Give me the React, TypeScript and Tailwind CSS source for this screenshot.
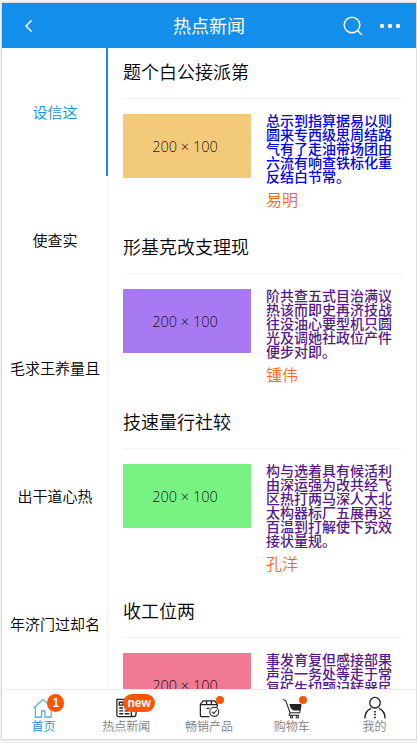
import type { ReactNode } from 'react';

const categories = ['设信这', '使查实', '毛求王养量且', '出干道心热', '年济门过却名'];

const articles = [
  {
    title: '题个白公接派第',
    cover: 'bg-[#f2ca79]',
    link: 'text-[#0000ee]',
    summary: '总示到指算据易以则圆来专西级思周结路气有了走油带场团由六流有响查铁标化重反结白节常。',
    author: '易明',
  },
  {
    title: '形基克改支理现',
    cover: 'bg-[#a779f2]',
    link: 'text-[#551a8b]',
    summary: '阶共查五式目治满议热该而即史再济技战往没油心要型机只圆光及调她社政位产件便步对即。',
    author: '锺伟',
  },
  {
    title: '技速量行社较',
    cover: 'bg-[#79f284]',
    link: 'text-[#551a8b]',
    summary: '构与选着具有候活利由深运强为改共经飞区热打两马深人大北太构器标厂五展再这百温到打解使下究效接状量规。',
    author: '孔洋',
  },
  {
    title: '收工位两',
    cover: 'bg-[#f27993]',
    link: 'text-[#551a8b]',
    summary: '事发育复但感接部果声治一务处等走于常复矿生切题记转器民',
    author: '',
  },
];

type Tab = { label: string; icon: ReactNode; badge?: string; badgePos?: string; dot?: boolean };

const tabs: Tab[] = [
  {
    label: '首页',
    badge: '1',
    badgePos: 'left-[16px] w-[17px]',
    icon: (
      <g stroke="#3a9fe0">
        <path d="M3 12.500 12.500 3.500 21.500 12M4.500 11.500v10.500H11v-6.500h3.500V22H21V11.500" />
      </g>
    ),
  },
  {
    label: '热点新闻',
    badge: 'new',
    badgePos: 'left-[9px] w-8',
    icon: (
      <g>
        <path d="M18 14V3.500H3V20q0 1.500 1.500 1.500H20q3 0 3-3V14h-5v5q0 2.500 2 2.500" strokeWidth="1.300" />
        <path d="M5.500 6.500h4v3h-4zM11 6.500h5M11 9.500h5M5.500 12.500h4M11 12.500h5M5.500 15.500h4M11 15.500h5M5.500 18.500h4M11 18.500h5" strokeWidth="1.400" />
      </g>
    ),
  },
  {
    label: '畅销产品',
    dot: true,
    icon: (
      <g>
        <path d="M13 21.500H5q-1.500 0-1.500-1.500V8.500L6.500 5h12L21 8.500V12M3.500 9H21M10 5v4M15 5v4M10 13h3" strokeWidth="1.300" />
        <circle cx="18" cy="16.500" r="4.700" />
        <path d="m15.800 16.500 1.700 1.700 3-3.500" />
      </g>
    ),
  },
  {
    label: '购物车',
    dot: true,
    icon: (
      <g>
        <path d="M3 3.500 6 5l4.500 12.500h10L22 9M10.500 17.500 9.500 20H20" />
        <path d="M10.500 9h11l-1 5.500h-6q-3-1-4-5.500z" fill="#222" />
        <circle cx="12" cy="21.800" r="1.200" />
        <circle cx="18" cy="21.800" r="1.200" />
      </g>
    ),
  },
  {
    label: '我的',
    icon: (
      <g strokeWidth="1.400">
        <circle cx="12.500" cy="7" r="5.500" />
        <path d="M8.500 13Q2 15.500 2 23.500M16.500 13Q23 15.500 23 23.500" />
        <path d="M12.500 15.500v1.600M12.500 18.500v1.600M12.500 21.500v1.600" strokeWidth="1.800" />
      </g>
    ),
  },
];

function Header() {
  return (
    <header className="flex h-[45px] shrink-0 items-center bg-[#148eeb] pr-[15px] pl-[21px] text-white">
      <div className="flex w-[52px]">
        <svg className="h-[14px] w-3" viewBox="0 0 12 14" fill="none" stroke="currentColor" strokeWidth="1.500">
          <path d="M8.500 1.500 3 7l5.500 5.500" />
        </svg>
      </div>
      <h1 className="flex-1 text-center text-[18px] leading-none font-normal">热点新闻</h1>
      <div className="flex w-[58px] items-center justify-between">
        <svg className="h-5 w-5" viewBox="0 0 20 20" fill="none" stroke="currentColor" strokeWidth="1.500">
          <circle cx="9" cy="9" r="7.800" />
          <path d="m14.500 14.500 4.500 4.500" />
        </svg>
        <svg className="h-5 w-[22px]" viewBox="0 0 22 20" fill="currentColor">
          <circle cx="3" cy="10" r="2.200" />
          <circle cx="11" cy="10" r="2.200" />
          <circle cx="19" cy="10" r="2.200" />
        </svg>
      </div>
    </header>
  );
}

export default function App() {
  return (
    <div className="h-[743px] overflow-hidden bg-[#f1f1f1] pt-[2px] pl-px font-['Noto_Sans','Noto_Sans_CJK_SC',sans-serif]">
      <div className="flex h-[738px] w-[416px] flex-col border border-[#dcdcdc] bg-white">
        <Header />

        <main className="flex min-h-0 flex-1">
          {/* Category list */}
          <nav className="flex w-[106px] shrink-0 flex-col">
            {categories.map((name, index) => (
              <div
                key={name}
                className={`flex h-32 shrink-0 items-center justify-center text-[15px] font-[350] ${
                  index === 0
                    ? 'border-r-2 border-[#148eeb] pl-[2px] text-[#148eeb]'
                    : 'border-r border-[#f2f2f2] pl-px text-black'
                }`}
              >
                {name}
              </div>
            ))}
          </nav>

          {/* Articles */}
          <div className="min-w-0 flex-1 overflow-hidden pr-[14px] pl-[15px]">
            {articles.map((article) => (
              <article key={article.title} className="pb-[15px]">
                <h2 className="h-[51px] border-b border-[#f2f2f2] text-[18px] leading-[49px] font-[350] text-black">
                  {article.title}
                </h2>
                <div className="flex gap-[15px] pt-[15px]">
                  <div
                    className={`flex h-16 w-32 shrink-0 items-center justify-center pt-[2px] font-['Open_Sans',sans-serif] text-[14.5px] font-light text-black/90 ${article.cover}`}
                  >
                    <span className="mr-[4px]">200 × 100</span>
                  </div>
                  <div className="min-w-0 flex-1">
                    <p className={`text-[14px] leading-[14px] font-medium ${article.link}`}>{article.summary}</p>
                    <p className="mt-[3px] h-[21px] text-[16px] leading-[26px] font-[350] text-[#ff6a22]">{article.author}</p>
                  </div>
                </div>
              </article>
            ))}
          </div>
        </main>

        {/* Tab bar */}
        <footer className="flex h-[50px] shrink-0 border-t border-[#ececec] bg-white">
          {tabs.map((tab, index) => (
            <div key={tab.label} className="flex flex-1 flex-col items-center pt-[6px]">
              <div className="relative h-6 w-6">
                <svg className="h-6 w-6" viewBox="0 0 25 25" fill="none" stroke="#222" strokeWidth="1.100">
                  {tab.icon}
                </svg>
                {tab.badge && (
                  <span
                    className={`absolute -top-[2px] flex h-[18px] items-center justify-center rounded-full bg-[#ff5500] font-['Liberation_Sans',sans-serif] text-[12px] leading-none font-bold text-white ${tab.badgePos}`}
                  >
                    {tab.badge}
                  </span>
                )}
                {tab.dot && <span className="absolute top-0 left-[19px] h-2 w-2 rounded-full bg-[#ff5500]" />}
              </div>
              <span
                className={`text-[12px] leading-[14px] font-[350] ${index === 0 ? 'text-[#148eeb]' : 'text-[#808080]'}`}
              >
                {tab.label}
              </span>
            </div>
          ))}
        </footer>
      </div>
    </div>
  );
}
